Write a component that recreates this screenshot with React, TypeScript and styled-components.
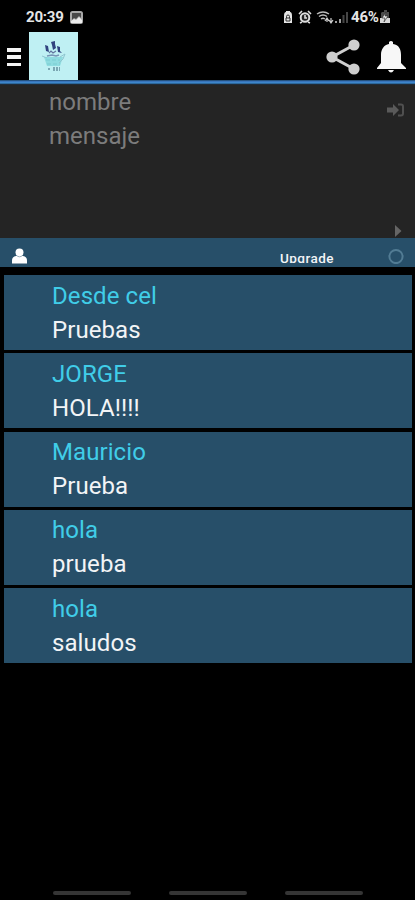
import React from "react";
import styled, { createGlobalStyle } from "styled-components";

const Global = createGlobalStyle`
  * { box-sizing: border-box; }
  body { margin: 0; background: #000; font-family: Roboto, sans-serif; }
`;
const Screen = styled.div`
  width: 415px; height: 900px; background: #000; overflow: hidden;
  display: flex; flex-direction: column;
`;
const StatusBar = styled.header`
  height: 32px; flex: none; display: flex; align-items: center;
  padding: 2px 25px 0 26px; color: #e6e6e6;
  svg { display: block; flex: none; }
`;
const StatusText = styled.span<{ $width: number }>`
  width: ${(p) => p.$width}px; flex: none; white-space: nowrap;
  font-size: 15px; line-height: 18px; font-weight: 700; letter-spacing: -0.2px;
`;
const StatusIcons = styled.div`
  margin-left: auto; display: flex; align-items: center;
`;
const Toolbar = styled.nav`
  height: 48px; flex: none; display: flex; align-items: flex-start; padding: 0 9px 0 7px;
  svg { display: block; flex: none; }
`;
const Menu = styled.div`
  width: 14px; height: 18px; margin: 16px 8px 0 0; display: flex; flex-direction: column;
  justify-content: space-between;
`;
const MenuLine = styled.span`
  height: 3.5px; background: #f4f4f4;
`;
const Actions = styled.div`
  height: 49px; margin-left: auto; display: flex; align-items: center; gap: 17px;
`;
const Rule = styled.div`
  height: 6px; flex: none;
  background: linear-gradient(#24517f 0 1px, #3974ba 1px 2px, #3d86cb 2px 3px, #2d689c 3px 4px, #202b36 4px 5px, #242424 5px);
`;
const Composer = styled.section`
  height: 152px; flex: none; background: #242424; padding: 0 10px 1px 49px;
  display: flex; justify-content: space-between;
`;
const Fields = styled.div`
  color: #7c7c7c; font-size: 24px; line-height: 34px; margin-top: -1px;
`;
const SideIcons = styled.div`
  display: flex; flex-direction: column; justify-content: space-between; align-items: flex-end;
  padding: 17px 0 0;
  svg { display: block; }
`;
const InfoBar = styled.section`
  height: 29px; flex: none; background: #274f69; display: flex; align-items: center;
  padding: 0 11px 0 12px; margin-bottom: 8px;
  svg { display: block; flex: none; }
`;
const UpgradeClip = styled.div`
  width: 57px; height: 13px; margin: 7px 52px 0 auto; overflow: hidden; color: #f3f5f7;
  font-size: 13.5px; line-height: 16px; font-weight: 500; letter-spacing: 0.45px; padding-left: 1px;
`;
const Messages = styled.main`
  padding: 0 3px 0 4px; display: grid; grid-auto-rows: 75px; row-gap: 3.3px;
`;
const Card = styled.article`
  background: #274f69; padding: 3.6px 0 0 48px; font-size: 24px; line-height: 34px;
  letter-spacing: 0.08px;
`;
const Author = styled.div`
  color: #40cde8;
`;
const Body = styled.div`
  color: #f2f4f6;
`;
const Navigation = styled.footer`
  margin-top: auto; height: 9px; display: flex; justify-content: center; gap: 38px;
`;
const NavLine = styled.span`
  width: 78px; height: 4px; border-radius: 2px; background: #353535;
`;

const messages = [
  ["Desde cel", "Pruebas"],
  ["JORGE", "HOLA!!!!"],
  ["Mauricio", "Prueba"],
  ["hola", "prueba"],
  ["hola", "saludos"],
];

const Picture = () => (
  <svg width="13" height="13" viewBox="0 0 13 13">
    <rect width="13" height="13" rx="2.5" fill="#a8a8a8" />
    <path d="M2 2h9v5L9 5 6 8 4 7 2 9z" fill="#484848" />
    <path d="m1 10 3-2 2 1 3-3 3 3v3H1z" fill="#ededed" />
  </svg>
);

const Logo = () => (
  <svg width="49" height="49" viewBox="0 0 49 49">
    <path fill="#bff0f3" d="M0 0h49v49H0z" />
    <path d="M15 25h19l-3 9H18z" fill="#8edce0" />
    <path d="m13 24 5 2M31 25l5-3-2 5-4 4" stroke="#8fc6d0" fill="none" />
    <path d="M17 28h14M18 32h13" stroke="#7accd1" strokeDasharray="4 2" />
    <path d="m16 13 3 1 1 6-3-1zM22 10l4-1v3l1 4-3 2-1-5zM28 14l3 1v4l2 2-4-1z" fill="#31437f" />
    <path d="m20 21 2-2 2 2 3-2" stroke="#63759f" strokeWidth="1.2" fill="none" />
    <path d="m18 24 5-1 4 1 3-1" stroke="#7796b6" strokeWidth="1.5" fill="none" />
    <path d="M19 37h3m2-1h7m-7 2h7" stroke="#668f9f" strokeWidth="1.5" strokeDasharray="2 1" />
  </svg>
);

const DeviceIcons = () => (
  <svg width="67" height="16" viewBox="0 0 67 16">
    <path d="M0 7q0-4 2-4V2h4v1q2 0 2 4v7H0z" fill="#e5e5e5" />
    <path d="M2.5 9V7.5a1.5 1.5 0 0 1 3 0V9M2 9h4v3H2z" stroke="#303030" fill="none" />
    <circle cx="21" cy="8.5" r="4.3" stroke="#ddd" strokeWidth="2" fill="#222" />
    <path d="m15 5 3-3m6 0 3 3m-9 8-2 1m8-1 2 1M21 6v3h2" stroke="#ddd" strokeWidth="1.6" fill="none" />
    <path d="M33 5q6-4 12 0M35 7.5q4-3 8 0M37 10q2-1.5 4 0" stroke="#bcbcbc" strokeWidth="1.5" fill="none" />
    <path d="m41 12 2-3 2 3m-2-3v4m4-4v4m-2-2 2 3 2-3" stroke="#cfcfcf" strokeWidth="1.2" fill="none" />
    <path d="M52 14v-2M56 14v-4" stroke="#a0a0a0" strokeWidth="2" />
    <path d="M59.5 14V6M63 14V3" stroke="#464646" strokeWidth="2" />
  </svg>
);

const Battery = () => (
  <svg width="10" height="14" viewBox="0 0 10 14">
    <path d="M2 2h2V0h3v2h2v11H1V3z" fill="#4c4c4c" />
    <path d="M0 8h10v5H0z" fill="#d8d8d8" />
    <path d="M6 2 2 8h3l-1 4 4-6H5z" fill="#e9e9e9" stroke="#222" strokeWidth=".6" />
  </svg>
);

export default function App() {
  return (
    <>
      <Global />
      <Screen>
        <StatusBar>
          <StatusText $width={44}>20:39</StatusText>
          <Picture />
          <StatusIcons>
            <DeviceIcons />
            <StatusText $width={29}>46%</StatusText>
            <Battery />
          </StatusIcons>
        </StatusBar>
        <Toolbar>
          <Menu><MenuLine /><MenuLine /><MenuLine /></Menu>
          <Logo />
          <Actions>
            <svg width="34" height="36" viewBox="0 0 34 36">
              <path d="M28 6 6 18l22 12" stroke="#cecece" strokeWidth="3" fill="none" />
              <circle cx="28" cy="6" r="5.6" fill="#cecece" />
              <circle cx="6" cy="18" r="5.6" fill="#cecece" />
              <circle cx="28" cy="30" r="5.6" fill="#cecece" />
            </svg>
            <svg width="29" height="32" viewBox="0 0 29 32">
              <path d="M12 3V1q2-2 4 0v2c6 1 8 5 8 11v8l5 5v1H0v-1l4-5v-8C4 8 7 4 12 3zM11 29h6q-3 5-6 0z" fill="#f7f7f7" />
            </svg>
          </Actions>
        </Toolbar>
        <Rule />
        <Composer>
          <Fields><div>nombre</div><div>mensaje</div></Fields>
          <SideIcons>
            <svg width="19" height="15" viewBox="0 0 19 15">
              <path d="M1 4.5h6V1l6 6-6 6V9.5H1z" fill="#5a5a5a" />
              <path d="M12 1.5h3q2 0 2 2v7q0 2-2 2h-3" stroke="#505050" strokeWidth="2" fill="none" />
            </svg>
            <svg width="11" height="12" viewBox="0 0 11 12"><path d="m1 0 6.5 6L1 12z" fill="#656565" /></svg>
          </SideIcons>
        </Composer>
        <InfoBar>
          <svg width="15" height="23" viewBox="0 0 15 23">
            <circle cx="7.5" cy="11.5" r="4" fill="#fff" />
            <path d="M0 22.5v-3q0-4 4-4.5h7q4 .5 4 4.5v3z" fill="#fff" />
            <path d="M4.2 14.2q3.3 3.2 6.6 0" fill="none" stroke="#6e8a9b" strokeWidth=".7" />
          </svg>
          <UpgradeClip>Upgrade</UpgradeClip>
          <svg width="16" height="22" viewBox="0 0 16 22"><circle cx="8" cy="14.5" r="6.6" fill="none" stroke="#527c94" strokeWidth="2" /></svg>
        </InfoBar>
        <Messages>
          {messages.map(([author, body], i) => (
            <Card key={i}><Author>{author}</Author><Body>{body}</Body></Card>
          ))}
        </Messages>
        <Navigation><NavLine /><NavLine /><NavLine /></Navigation>
      </Screen>
    </>
  );
}
